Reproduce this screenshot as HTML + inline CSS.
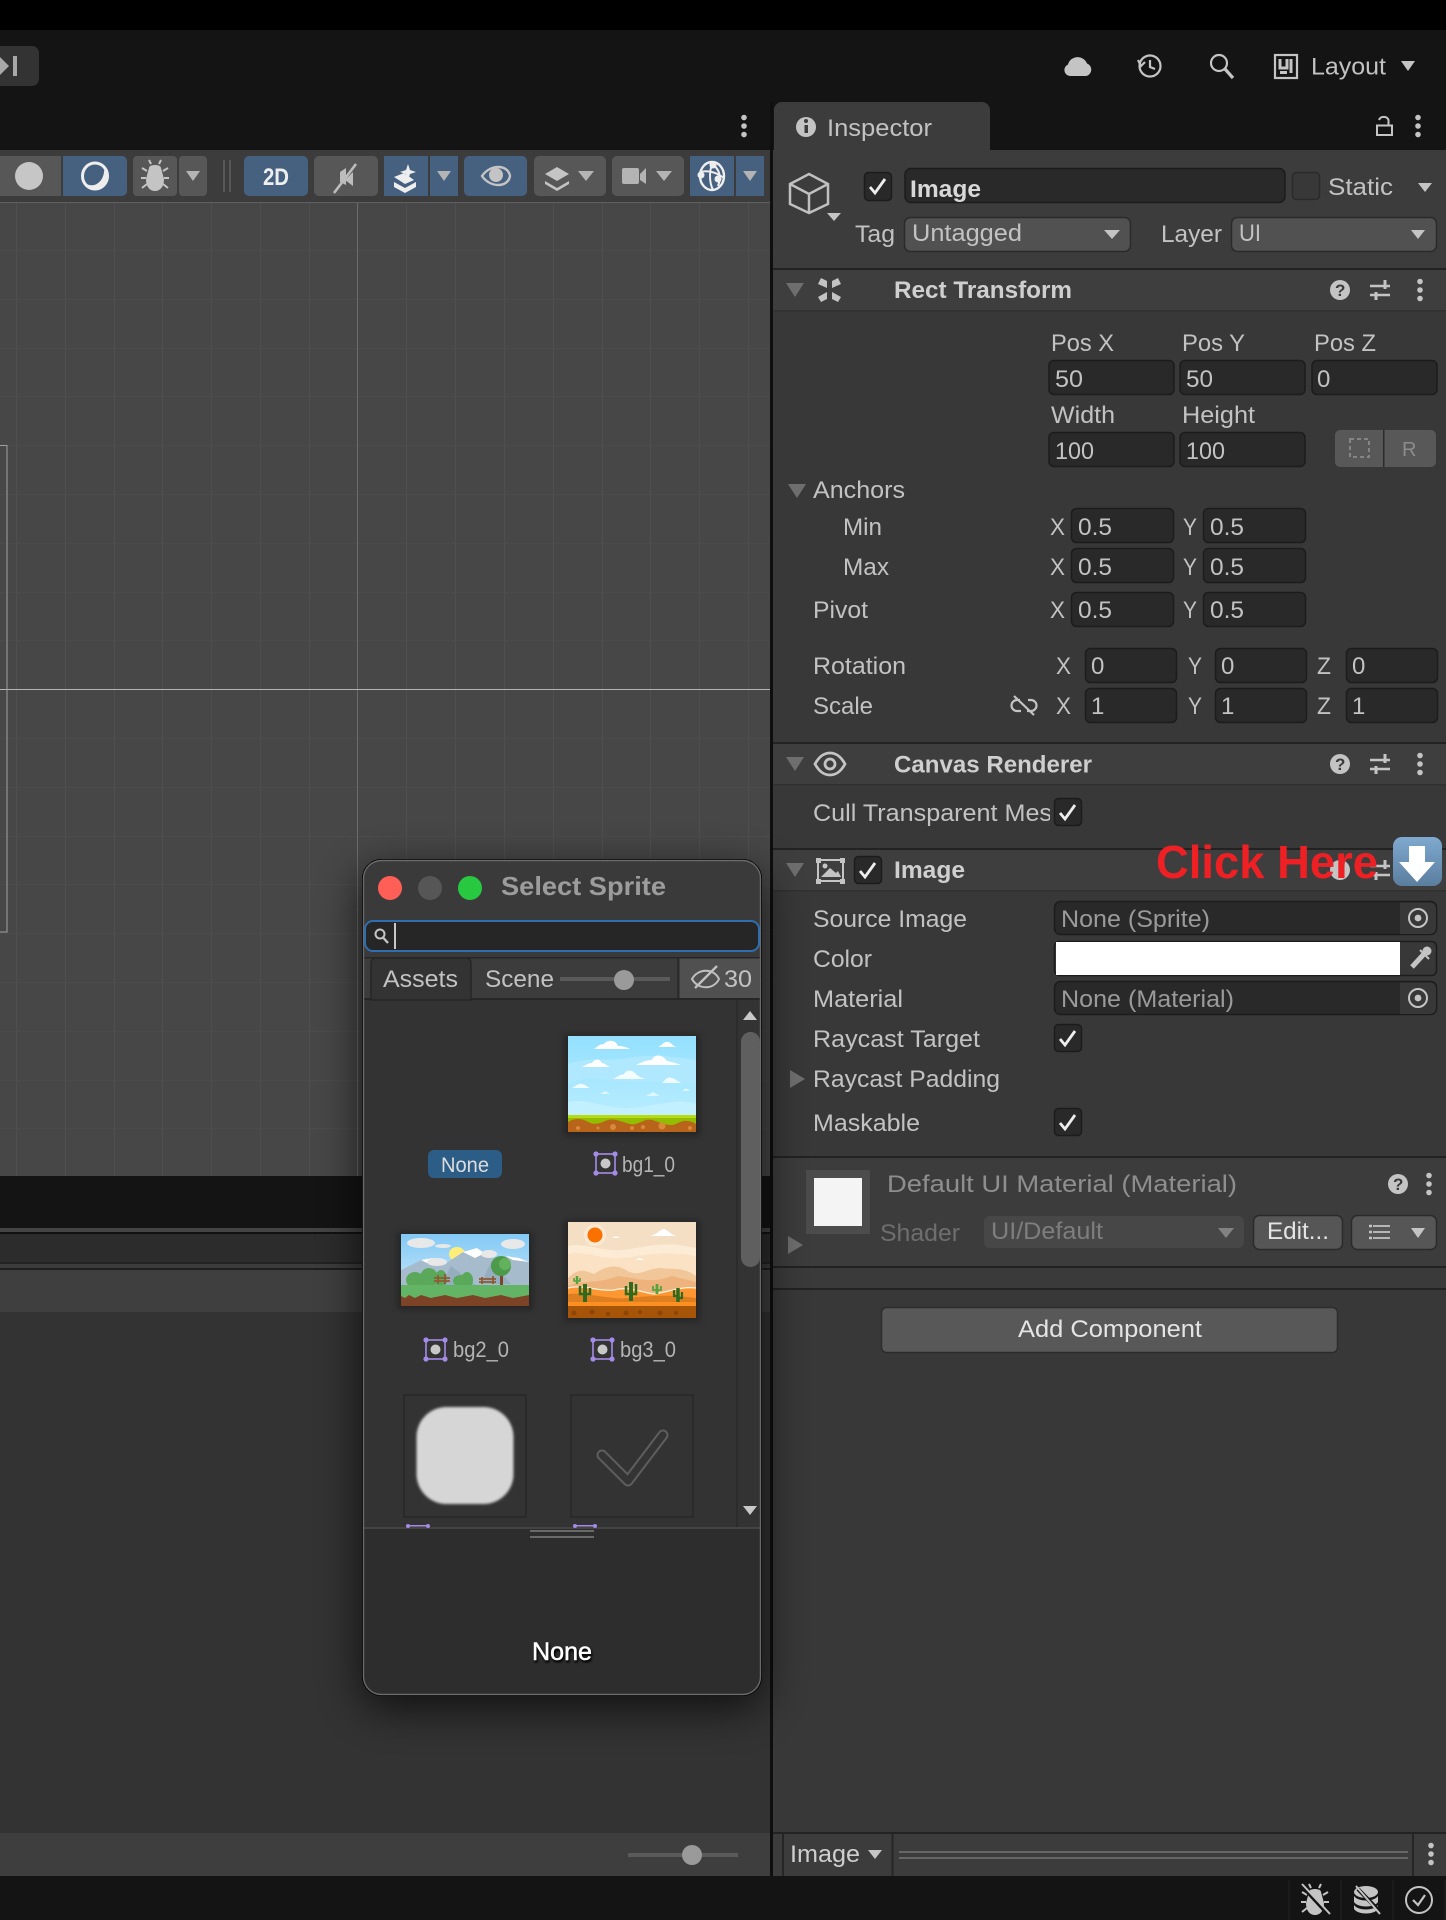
<!DOCTYPE html>
<html><head><meta charset="utf-8">
<style>
html,body{margin:0;padding:0;background:#141414;width:1446px;height:1920px;overflow:hidden}
svg{display:block;position:absolute;left:0;top:0}
text{font-family:"Liberation Sans",sans-serif;font-size:24px;fill:#c2c2c2}
.b{font-weight:bold;fill:#cfcfcf}
.w{fill:#e4e4e4}
.g{fill:#9a9a9a}
.f{fill:#292929;stroke:#1c1c1c;stroke-width:1.5}
.d{fill:#515151;stroke:#2a2a2a;stroke-width:1.5}
.c{fill:#292929;stroke:#1c1c1c;stroke-width:1.5}
.tb{fill:#575757}
.bl{fill:#46617f}
.tri{fill:#b4b4b4}
.ck{fill:none;stroke:#eee;stroke-width:2.8}
.ic{fill:none;stroke:#c4c4c4;stroke-width:2.2}
</style></head><body>
<svg width="1446" height="1920" viewBox="0 0 1446 1920" xmlns="http://www.w3.org/2000/svg">
<defs>
<symbol id="dots" overflow="visible"><circle cx="0" cy="-8.5" r="2.8" fill="#c4c4c4"/><circle cx="0" cy="0" r="2.8" fill="#c4c4c4"/><circle cx="0" cy="8.5" r="2.8" fill="#c4c4c4"/></symbol>
<symbol id="sl" overflow="visible"><path d="M-10 -4H10M-10 5H10" stroke="#c4c4c4" stroke-width="2.4" fill="none"/><path d="M5 -10V-1M-4 2V10" stroke="#c4c4c4" stroke-width="3" fill="none"/></symbol>
<symbol id="tgt" overflow="visible"><circle r="9" fill="none" stroke="#c4c4c4" stroke-width="2"/><circle r="3.4" fill="#c4c4c4"/></symbol>
<symbol id="sp" overflow="visible"><rect x="2" y="2" width="19" height="19" fill="none" stroke="#a58be8" stroke-width="1.6"/><circle cx="2" cy="2" r="2.6" fill="#a58be8"/><circle cx="21" cy="2" r="2.6" fill="#a58be8"/><circle cx="2" cy="21" r="2.6" fill="#a58be8"/><circle cx="21" cy="21" r="2.6" fill="#a58be8"/><circle cx="11.5" cy="11.5" r="5" fill="#c8c8c8"/></symbol>
<symbol id="bug" overflow="visible"><path d="M-6 -9C-6 -13 6 -13 6 -9L9 2C9 10 5 14 0 14C-5 14 -9 10 -9 2Z" fill="#c4c4c4"/><path d="M-4 -13L-6 -17M4 -13L6 -17M-8 -6L-13 -9M8 -6L13 -9M-9 1L-14 1M9 1L14 1M-8 7L-13 11M8 7L13 11" stroke="#c4c4c4" stroke-width="2" fill="none"/></symbol>
<linearGradient id="sk1" x1="0" y1="0" x2="0" y2="1"><stop offset="0" stop-color="#93e0ff"/><stop offset="1" stop-color="#bfefff"/></linearGradient>
<linearGradient id="sk2" x1="0" y1="0" x2="0" y2="1"><stop offset="0" stop-color="#82c9f5"/><stop offset="1" stop-color="#d8eefa"/></linearGradient>
<linearGradient id="arr" x1="0" y1="0" x2="0" y2="1"><stop offset="0" stop-color="#7fa9cf"/><stop offset="1" stop-color="#5b7e9f"/></linearGradient>
<filter id="shadow" x="-30%" y="-30%" width="160%" height="160%"><feGaussianBlur stdDeviation="22"/></filter>
<filter id="soft" x="-20%" y="-20%" width="140%" height="140%"><feGaussianBlur stdDeviation="1.4"/></filter>
<filter id="sm" x="-20%" y="-20%" width="140%" height="140%"><feGaussianBlur stdDeviation="3"/></filter>
<filter id="ts" x="-20%" y="-40%" width="140%" height="180%"><feGaussianBlur stdDeviation="1"/></filter>
<clipPath id="dlg"><rect x="363" y="861" width="398" height="833" rx="17"/></clipPath>
<clipPath id="cull"><rect x="800" y="790" width="250" height="40"/></clipPath>
</defs>

<!-- base -->
<rect width="1446" height="1920" fill="#141414"/>
<rect width="1446" height="30" fill="#000"/>
<rect x="-8" y="46" width="47" height="40" rx="7" fill="#333"/>
<path d="M0 57L9 66L0 75Z" fill="#a8a8a8"/><rect x="13" y="56" width="4" height="20" fill="#a8a8a8"/>
<use href="#dots" x="744" y="126"/>

<!-- top right -->
<path d="M1070 76a6 6 0 0 1 -2 -11.500a10 10 0 0 1 19 -1a6.500 6.500 0 0 1 -1 12.500Z" fill="#c4c4c4"/>
<circle cx="1150" cy="66" r="10.500" class="ic"/><path d="M1150 60V67L1155 69M1138 60L1141 66L1145 62" class="ic"/>
<circle cx="1219" cy="63" r="8" class="ic"/><path d="M1225 69L1233 78" class="ic" style="stroke-width:3.2"/>
<rect x="1275" y="55" width="22" height="23" class="ic"/><path d="M1280 59V68H1287V59M1291 59V73M1280 72.500H1287" fill="none" stroke="#c4c4c4" stroke-width="3"/>
<text x="1311" y="74.500" textLength="75" lengthAdjust="spacingAndGlyphs">Layout</text>
<path d="M1401 61H1415L1408 71Z" fill="#c4c4c4"/>

<!-- scene toolbar & view -->
<rect x="0" y="150" width="770" height="52" fill="#3c3c3c"/>
<rect x="0" y="202" width="770" height="1.500" fill="#606060"/>
<rect x="0" y="203" width="770" height="973" fill="#474747"/>
<g stroke="#4f4f4f" stroke-width="1">
<path d="M16.500 203V1176M65.500 203V1176M114.500 203V1176M162.500 203V1176M211.500 203V1176M260.500 203V1176M309.500 203V1176M406.500 203V1176M455.500 203V1176M504.500 203V1176M553.500 203V1176M602.500 203V1176M650.500 203V1176M699.500 203V1176M748.500 203V1176"/>
</g>
<g stroke="#4c4c4c" stroke-width="1">
<path d="M0 250.500H770M0 299.500H770M0 348.500H770M0 396.500H770M0 445.500H770M0 494.500H770M0 543.500H770M0 592.500H770M0 640.500H770M0 738.500H770M0 787.500H770M0 836.500H770M0 884.500H770M0 933.500H770M0 982.500H770M0 1031.500H770M0 1080.500H770M0 1128.500H770"/>
</g>
<path d="M357.500 203V1176" stroke="#6c6c6c" stroke-width="1"/>
<path d="M0 689.500H770" stroke="#b4b4b4" stroke-width="1"/>
<path d="M0 445.500H7V932H0" fill="none" stroke="#a0a0a0" stroke-width="1"/>

<!-- toolbar buttons -->
<path d="M-5 156H61V196H-5Z" class="tb"/>
<circle cx="29" cy="176" r="14" fill="#c6c6c6"/>
<path d="M63 156H122a5 5 0 0 1 5 5V191a5 5 0 0 1 -5 5H63Z" class="bl"/>
<ellipse cx="95" cy="176" rx="12.500" ry="13" fill="none" stroke="#eee" stroke-width="3"/><path d="M85 183C95 190 106 180 104 166C110 178 104 190 92 189C88 189 86 186 85 183Z" fill="#eee"/>
<rect x="133" y="156" width="44" height="40" rx="4" class="tb"/><rect x="179" y="156" width="28" height="40" rx="4" class="tb"/>
<use href="#bug" x="155" y="177"/>
<path d="M186 171H200L193 181Z" class="tri"/>
<path d="M224 160V192M230 160V192" stroke="#585858" stroke-width="2"/>
<rect x="244" y="156" width="64" height="40" rx="5" class="bl"/>
<text x="263" y="185" textLength="26" lengthAdjust="spacingAndGlyphs" style="font-size:24px;font-weight:bold;fill:#eee">2D</text>
<rect x="314" y="156" width="64" height="40" rx="5" class="tb"/>
<path d="M340 172L346 168V185L340 182ZM353 172L353 186L345 180Z" fill="#bdbdbd"/><path d="M334 193L356 164" stroke="#bdbdbd" stroke-width="2.6"/>
<path d="M384 156H428V196H384Z" class="bl"/><path d="M430 156H458V196H430Z" class="bl"/>
<path d="M408 164L410 170L416 172L410 174L408 180L406 174L400 172L406 170Z" fill="#eee"/>
<path d="M394 177L404 173L414 180L405 184Z" fill="#eee"/><path d="M394 182L405 188L416 182V187L405 193L394 187Z" fill="#eee"/>
<path d="M437 171H451L444 181Z" class="tri"/>
<rect x="464" y="156" width="63" height="40" rx="5" class="bl"/>
<path d="M482 176C490 164 508 164 510 176C508 188 490 188 482 176Z" fill="none" stroke="#c4c4c4" stroke-width="2.4"/><circle cx="496" cy="175" r="7" fill="#c4c4c4"/>
<rect x="534" y="156" width="72" height="40" rx="5" class="tb"/>
<path d="M545 174L557 167L569 174L557 181Z" fill="#c4c4c4"/><path d="M545 181L557 188L569 181V184L557 191L545 184Z" fill="#c4c4c4"/>
<path d="M578 171H594L586 181Z" class="tri"/>
<rect x="612" y="156" width="72" height="40" rx="5" class="tb"/>
<rect x="622" y="168" width="17" height="16" rx="2" fill="#b4b4b4"/><path d="M640 174L646 168V184L640 180Z" fill="#b4b4b4"/>
<path d="M656 171H672L664 181Z" class="tri"/>
<path d="M690 156H734V196H690Z" class="bl"/><path d="M736 156H764V196H736Z" class="bl"/>
<ellipse cx="712" cy="176" rx="12" ry="14" fill="none" stroke="#eee" stroke-width="2.400"/>
<path d="M700 172C708 170 716 172 724 178M713 162C709 170 709 182 713 190M713 164C719 170 722 176 718 186" fill="none" stroke="#eee" stroke-width="2"/>
<circle cx="713" cy="165" r="3.500" fill="#eee"/><circle cx="701" cy="175" r="3.500" fill="#eee"/><circle cx="718" cy="179" r="3.500" fill="#eee"/>
<path d="M743 171H757L750 181Z" class="tri"/>

<!-- lower-left panels -->
<rect x="0" y="1176" width="770" height="52" fill="#141414"/>
<rect x="0" y="1228" width="770" height="4" fill="#444"/>
<rect x="0" y="1232" width="770" height="2" fill="#111"/>
<rect x="0" y="1234" width="770" height="28" fill="#2c2c2c"/>
<rect x="0" y="1262" width="770" height="2" fill="#222"/>
<rect x="0" y="1264" width="770" height="4" fill="#3c3c3c"/>
<rect x="0" y="1268" width="770" height="2" fill="#1e1e1e"/>
<rect x="0" y="1270" width="770" height="42" fill="#3f3f3f"/>
<rect x="0" y="1312" width="770" height="521" fill="#333"/>
<rect x="0" y="1833" width="770" height="43" fill="#3e3e3e"/>
<rect x="628" y="1853" width="110" height="4" fill="#5a5a5a"/>
<ellipse cx="692" cy="1855" rx="10" ry="10" fill="#9a9a9a"/>

<!-- inspector -->
<rect x="770" y="102" width="3" height="1774" fill="#0f0f0f"/>
<rect x="773" y="150" width="673" height="1683" fill="#383838"/>
<path d="M774 150V110a8 8 0 0 1 8 -8H982a8 8 0 0 1 8 8V150Z" fill="#3c3c3c"/>
<rect x="773" y="150" width="673" height="118" fill="#3c3c3c"/>
<circle cx="806" cy="127" r="10" fill="#c4c4c4"/><rect x="804.500" y="125" width="3.500" height="8" fill="#3c3c3c"/><circle cx="806" cy="121" r="2" fill="#3c3c3c"/>
<text x="827" y="136" textLength="105" lengthAdjust="spacingAndGlyphs">Inspector</text>
<rect x="1377" y="125.500" width="15" height="9.500" fill="none" stroke="#c4c4c4" stroke-width="2"/><path d="M1379 120a5 4.500 0 0 1 9.500 0V125" fill="none" stroke="#c4c4c4" stroke-width="2"/>
<use href="#dots" x="1418" y="126"/>

<!-- object header -->
<path d="M809 174L828 184V204L809 213L790 204V184ZM790 184L809 194L828 184M809 194V213" fill="none" stroke="#c0c0c0" stroke-width="2.500"/>
<path d="M827 213H841L834 221Z" fill="#c4c4c4"/>
<rect x="864.500" y="172.500" width="27" height="28" rx="4" class="c"/><path d="M870 187L875 193L885 179" class="ck"/>
<rect x="905" y="168.500" width="380" height="34" rx="6" class="f"/>
<text x="910" y="197" textLength="71" lengthAdjust="spacingAndGlyphs" class="b" style="font-weight:bold;fill:#d8d8d8">Image</text>
<rect x="1292.500" y="172.500" width="27" height="27" rx="4" fill="#383838" stroke="#2a2a2a" stroke-width="1.500"/>
<text x="1328" y="195" textLength="65" lengthAdjust="spacingAndGlyphs">Static</text>
<path d="M1418 183H1432L1425 192Z" fill="#c4c4c4"/>
<text x="855" y="242" textLength="40" lengthAdjust="spacingAndGlyphs">Tag</text>
<rect x="904.500" y="217.500" width="226" height="34" rx="6" class="d"/>
<text x="912" y="241" textLength="110" lengthAdjust="spacingAndGlyphs">Untagged</text>
<path d="M1104 230H1120L1112 239Z" fill="#c4c4c4"/>
<text x="1161" y="242" textLength="61" lengthAdjust="spacingAndGlyphs">Layer</text>
<rect x="1231.500" y="217.500" width="205" height="34" rx="6" class="d"/>
<text x="1239" y="241" textLength="22" lengthAdjust="spacingAndGlyphs">UI</text>
<path d="M1411 230H1425L1418 239Z" fill="#c4c4c4"/>

<!-- Rect Transform -->
<rect x="773" y="268" width="673" height="2" fill="#222"/>
<rect x="773" y="270" width="673" height="40" fill="#3e3e3e"/>
<rect x="773" y="310" width="673" height="1.500" fill="#303030"/>
<path d="M786 283H804L795 297Z" fill="#6e6e6e"/>
<g fill="#c4c4c4"><path d="M821 278L827 281L827 288L818 284ZM838 278L832 281L832 288L841 284ZM818 297L827 292L827 299L821 302ZM841 297L832 292L832 299L838 302Z"/></g>
<text x="894" y="298" textLength="178" lengthAdjust="spacingAndGlyphs" class="b">Rect Transform</text>
<circle cx="1340" cy="290" r="10" fill="#c4c4c4"/><text x="1335" y="296" style="font-size:17px;font-weight:bold;fill:#3a3a3a">?</text>
<use href="#sl" x="1380" y="290"/><use href="#dots" x="1420" y="290"/>

<text x="1051" y="351" textLength="63" lengthAdjust="spacingAndGlyphs">Pos X</text><text x="1182" y="351" textLength="63" lengthAdjust="spacingAndGlyphs">Pos Y</text><text x="1314" y="351" textLength="62" lengthAdjust="spacingAndGlyphs">Pos Z</text>
<rect x="1049" y="360.500" width="125" height="34" rx="5" class="f"/><rect x="1180" y="360.500" width="125" height="34" rx="5" class="f"/><rect x="1312" y="360.500" width="125" height="34" rx="5" class="f"/>
<text x="1055" y="387" textLength="28" lengthAdjust="spacingAndGlyphs">50</text><text x="1186" y="387" textLength="27" lengthAdjust="spacingAndGlyphs">50</text><text x="1317" y="387">0</text>
<text x="1051" y="423" textLength="64" lengthAdjust="spacingAndGlyphs">Width</text><text x="1182" y="423" textLength="73" lengthAdjust="spacingAndGlyphs">Height</text>
<rect x="1049" y="432.500" width="125" height="34" rx="5" class="f"/><rect x="1180" y="432.500" width="125" height="34" rx="5" class="f"/>
<text x="1055" y="459" textLength="39" lengthAdjust="spacingAndGlyphs">100</text><text x="1186" y="459" textLength="39" lengthAdjust="spacingAndGlyphs">100</text>
<rect x="1335" y="430" width="101" height="37" rx="5" fill="#585858"/><rect x="1383" y="430" width="1.500" height="37" fill="#2a2a2a"/>
<rect x="1350" y="439" width="19" height="18" fill="none" stroke="#8a8a8a" stroke-width="1.800" stroke-dasharray="4 3"/>
<text x="1402" y="456" style="font-size:20px;fill:#8c8c8c">R</text>

<path d="M788 484H806L797 498Z" fill="#6e6e6e"/>
<text x="813" y="498" textLength="92" lengthAdjust="spacingAndGlyphs">Anchors</text>
<text x="843" y="535" textLength="39" lengthAdjust="spacingAndGlyphs">Min</text><text x="843" y="575" textLength="46" lengthAdjust="spacingAndGlyphs">Max</text><text x="813" y="618" textLength="55" lengthAdjust="spacingAndGlyphs">Pivot</text>
<g>
<text x="1050" y="535" textLength="15" lengthAdjust="spacingAndGlyphs">X</text><text x="1183" y="535" textLength="14" lengthAdjust="spacingAndGlyphs">Y</text>
<rect x="1071.500" y="508.500" width="102" height="34" rx="5" class="f"/><rect x="1203.500" y="508.500" width="102" height="34" rx="5" class="f"/>
<text x="1078" y="535" textLength="34" lengthAdjust="spacingAndGlyphs">0.5</text><text x="1210" y="535" textLength="34" lengthAdjust="spacingAndGlyphs">0.5</text>
<text x="1050" y="575" textLength="15" lengthAdjust="spacingAndGlyphs">X</text><text x="1183" y="575" textLength="14" lengthAdjust="spacingAndGlyphs">Y</text>
<rect x="1071.500" y="548.500" width="102" height="34" rx="5" class="f"/><rect x="1203.500" y="548.500" width="102" height="34" rx="5" class="f"/>
<text x="1078" y="575" textLength="34" lengthAdjust="spacingAndGlyphs">0.5</text><text x="1210" y="575" textLength="34" lengthAdjust="spacingAndGlyphs">0.5</text>
<text x="1050" y="618" textLength="15" lengthAdjust="spacingAndGlyphs">X</text><text x="1183" y="618" textLength="14" lengthAdjust="spacingAndGlyphs">Y</text>
<rect x="1071.500" y="592.500" width="102" height="34" rx="5" class="f"/><rect x="1203.500" y="592.500" width="102" height="34" rx="5" class="f"/>
<text x="1078" y="618" textLength="34" lengthAdjust="spacingAndGlyphs">0.5</text><text x="1210" y="618" textLength="34" lengthAdjust="spacingAndGlyphs">0.5</text>
</g>
<text x="813" y="674" textLength="93" lengthAdjust="spacingAndGlyphs">Rotation</text><text x="813" y="714" textLength="60" lengthAdjust="spacingAndGlyphs">Scale</text>
<g>
<text x="1056" y="674" textLength="15" lengthAdjust="spacingAndGlyphs">X</text><text x="1188" y="674" textLength="14" lengthAdjust="spacingAndGlyphs">Y</text><text x="1317" y="674" textLength="14" lengthAdjust="spacingAndGlyphs">Z</text>
<rect x="1085.500" y="648.500" width="91" height="34" rx="5" class="f"/><rect x="1215.500" y="648.500" width="91" height="34" rx="5" class="f"/><rect x="1346.500" y="648.500" width="91" height="34" rx="5" class="f"/>
<text x="1091" y="674">0</text><text x="1221" y="674">0</text><text x="1352" y="674">0</text>
<text x="1056" y="714" textLength="15" lengthAdjust="spacingAndGlyphs">X</text><text x="1188" y="714" textLength="14" lengthAdjust="spacingAndGlyphs">Y</text><text x="1317" y="714" textLength="14" lengthAdjust="spacingAndGlyphs">Z</text>
<rect x="1085.500" y="688.500" width="91" height="34" rx="5" class="f"/><rect x="1215.500" y="688.500" width="91" height="34" rx="5" class="f"/><rect x="1346.500" y="688.500" width="91" height="34" rx="5" class="f"/>
<text x="1091" y="714">1</text><text x="1221" y="714">1</text><text x="1352" y="714">1</text>
</g>
<path d="M1020 700H1017a5 5 0 0 0 0 11H1021M1028 700H1031a5 5 0 0 1 0 11H1027M1014 696L1034 715" fill="none" stroke="#c4c4c4" stroke-width="2.200"/>

<!-- Canvas Renderer -->
<rect x="773" y="742" width="673" height="2" fill="#222"/>
<rect x="773" y="744" width="673" height="40" fill="#3e3e3e"/>
<rect x="773" y="784" width="673" height="1.500" fill="#303030"/>
<path d="M786 757H804L795 771Z" fill="#6e6e6e"/>
<path d="M815 764C820 755 825 753 830 753C835 753 840 755 845 764C840 773 835 775 830 775C825 775 820 773 815 764Z" fill="none" stroke="#c4c4c4" stroke-width="2.800"/><circle cx="830" cy="764" r="5" fill="none" stroke="#c4c4c4" stroke-width="2.800"/>
<text x="894" y="772.500" textLength="198" lengthAdjust="spacingAndGlyphs" class="b">Canvas Renderer</text>
<circle cx="1340" cy="764" r="10" fill="#c4c4c4"/><text x="1335" y="770" style="font-size:17px;font-weight:bold;fill:#3a3a3a">?</text>
<use href="#sl" x="1380" y="764"/><use href="#dots" x="1420" y="764"/>
<g clip-path="url(#cull)"><text x="813" y="821" textLength="253" lengthAdjust="spacingAndGlyphs">Cull Transparent Mesh</text></g>
<rect x="1054.500" y="798.500" width="27" height="27" rx="4" class="c"/><path d="M1060 813L1065 819L1075 805" class="ck"/>

<!-- Image comp -->
<rect x="773" y="848" width="673" height="2" fill="#222"/>
<rect x="773" y="850" width="673" height="40" fill="#3e3e3e"/>
<rect x="773" y="890" width="673" height="1.500" fill="#303030"/>
<path d="M786 863H804L795 877Z" fill="#6e6e6e"/>
<rect x="818" y="860" width="25" height="21" fill="none" stroke="#c4c4c4" stroke-width="2"/>
<g fill="#c4c4c4"><rect x="816" y="858" width="5" height="5"/><rect x="840" y="858" width="5" height="5"/><rect x="816" y="879" width="5" height="5"/><rect x="840" y="879" width="5" height="5"/><path d="M821 877L830 868L836 873L838 871L841 877Z"/><circle cx="825" cy="866" r="2.500"/></g>
<rect x="854.500" y="856.500" width="27" height="27" rx="4" class="c"/><path d="M860 871L865 877L875 863" class="ck"/>
<text x="894" y="878" textLength="71" lengthAdjust="spacingAndGlyphs" class="b">Image</text>
<circle cx="1340" cy="870" r="10" fill="#c4c4c4"/>
<use href="#sl" x="1380" y="870"/>

<text x="813" y="927" textLength="154" lengthAdjust="spacingAndGlyphs">Source Image</text>
<rect x="1054.500" y="901.500" width="382" height="33" rx="6" class="f"/>
<path d="M1400 902.500H1430a6 6 0 0 1 6 6V928a6 6 0 0 1 -6 6H1400Z" fill="#383838"/>
<text x="1061" y="927" textLength="149" lengthAdjust="spacingAndGlyphs" class="g">None (Sprite)</text>
<use href="#tgt" x="1418" y="918"/>
<text x="813" y="967" textLength="59" lengthAdjust="spacingAndGlyphs">Color</text>
<rect x="1054.500" y="941.500" width="382" height="34" rx="5" fill="#383838" stroke="#1c1c1c" stroke-width="1.500"/>
<rect x="1056" y="942" width="344" height="33" fill="#fff"/>
<path d="M1412 967L1424 954" stroke="#c4c4c4" stroke-width="5" fill="none"/><circle cx="1427" cy="951" r="4.500" fill="#c4c4c4"/><path d="M1420 950L1429 959" stroke="#c4c4c4" stroke-width="2"/>
<text x="813" y="1007" textLength="90" lengthAdjust="spacingAndGlyphs">Material</text>
<rect x="1054.500" y="981.500" width="382" height="33" rx="6" class="f"/>
<path d="M1400 982.500H1430a6 6 0 0 1 6 6V1008a6 6 0 0 1 -6 6H1400Z" fill="#383838"/>
<text x="1061" y="1007" textLength="173" lengthAdjust="spacingAndGlyphs" class="g">None (Material)</text>
<use href="#tgt" x="1418" y="998"/>
<text x="813" y="1047" textLength="167" lengthAdjust="spacingAndGlyphs">Raycast Target</text>
<rect x="1054.500" y="1024.500" width="27" height="27" rx="4" class="c"/><path d="M1060 1039L1065 1045L1075 1031" class="ck"/>
<path d="M790 1070L805 1079L790 1088Z" fill="#6e6e6e"/>
<text x="813" y="1087" textLength="187" lengthAdjust="spacingAndGlyphs">Raycast Padding</text>
<text x="813" y="1131" textLength="107" lengthAdjust="spacingAndGlyphs">Maskable</text>
<rect x="1054.500" y="1108.500" width="27" height="27" rx="4" class="c"/><path d="M1060 1123L1065 1129L1075 1115" class="ck"/>

<!-- material -->
<rect x="773" y="1156" width="673" height="2" fill="#222"/>
<rect x="773" y="1158" width="673" height="108" fill="#3c3c3c"/>
<rect x="806" y="1170" width="64" height="64" fill="#4c4c4c"/><rect x="814" y="1178" width="48" height="48" fill="#f4f4f4"/>
<path d="M788 1236L803 1245L788 1254Z" fill="#6e6e6e"/>
<text x="887" y="1192" textLength="350" lengthAdjust="spacingAndGlyphs" style="fill:#8e8e8e">Default UI Material (Material)</text>
<circle cx="1398" cy="1184" r="10" fill="#c4c4c4"/><text x="1393" y="1190" style="font-size:17px;font-weight:bold;fill:#3a3a3a">?</text>
<use href="#dots" x="1429" y="1184"/>
<text x="880" y="1241" textLength="80" lengthAdjust="spacingAndGlyphs" style="fill:#6e6e6e">Shader</text>
<rect x="984" y="1216" width="260" height="32" rx="6" fill="#474747"/>
<text x="991" y="1239" textLength="112" lengthAdjust="spacingAndGlyphs" style="fill:#7e7e7e">UI/Default</text>
<path d="M1218 1228H1234L1226 1238Z" fill="#828282"/>
<rect x="1253.500" y="1215.500" width="89" height="34" rx="6" fill="#565656" stroke="#2a2a2a" stroke-width="1.500"/>
<text x="1267" y="1239" textLength="62" lengthAdjust="spacingAndGlyphs" class="w">Edit...</text>
<rect x="1351.500" y="1215.500" width="85" height="34" rx="6" fill="#565656" stroke="#2a2a2a" stroke-width="1.500"/>
<path d="M1373 1226H1390M1373 1232H1390M1373 1238H1390" stroke="#c4c4c4" stroke-width="1.800"/><path d="M1369 1226H1372M1369 1232H1372M1369 1238H1372" stroke="#c4c4c4" stroke-width="2.500"/>
<path d="M1411 1228H1425L1418 1238Z" fill="#c4c4c4"/>
<rect x="773" y="1266" width="673" height="2" fill="#222"/>
<rect x="773" y="1268" width="673" height="20" fill="#3a3a3a"/>
<rect x="773" y="1288" width="673" height="2" fill="#222"/>
<rect x="881.500" y="1307.500" width="456" height="45" rx="5" fill="#585858" stroke="#2c2c2c" stroke-width="1.500"/>
<text x="1018" y="1337" textLength="184" lengthAdjust="spacingAndGlyphs" class="w">Add Component</text>

<!-- inspector bottom bar -->
<rect x="773" y="1832" width="673" height="2" fill="#232323"/>
<rect x="773" y="1834" width="673" height="42" fill="#3c3c3c"/>
<path d="M783 1834V1876M892.500 1834V1876M1413 1834V1876" stroke="#262626" stroke-width="2"/>
<text x="790" y="1862" textLength="70" lengthAdjust="spacingAndGlyphs" style="fill:#cfcfcf">Image</text>
<path d="M868 1850H882L875 1859Z" fill="#c4c4c4"/>
<rect x="899" y="1851" width="509" height="2" fill="#666"/><rect x="899" y="1857" width="509" height="2" fill="#666"/>
<use href="#dots" x="1431" y="1854"/>

<!-- status bar -->
<path d="M1289 1880V1920M1341 1880V1920M1393 1880V1920M1445 1880V1920" stroke="#222" stroke-width="1"/>
<use href="#bug" x="1315" y="1901"/><path d="M1304 1888L1328 1914" stroke="#141414" stroke-width="4"/><path d="M1302 1884L1330 1914" stroke="#c4c4c4" stroke-width="2"/>
<g fill="#c4c4c4"><ellipse cx="1366" cy="1892" rx="12" ry="6"/><path d="M1354 1896C1358 1902 1374 1902 1378 1896V1902C1374 1908 1358 1908 1354 1902Z"/><path d="M1354 1905C1358 1911 1374 1911 1378 1905V1909C1374 1915 1358 1915 1354 1909Z"/></g>
<path d="M1358 1889L1382 1914" stroke="#141414" stroke-width="4"/><path d="M1356 1886L1380 1914" stroke="#c4c4c4" stroke-width="2"/>
<circle cx="1419" cy="1900" r="13" fill="none" stroke="#c4c4c4" stroke-width="2"/><path d="M1413 1900L1418 1905L1425 1895" fill="none" stroke="#c4c4c4" stroke-width="2.200"/>

<!-- dialog shadow -->
<rect x="362" y="872" width="400" height="835" rx="18" fill="#000" opacity=".7" filter="url(#shadow)"/>

<!-- dialog -->
<rect x="362.500" y="859.500" width="399" height="836" rx="19" fill="#2d2d2d" stroke="#000" stroke-width="1"/>
<g clip-path="url(#dlg)">
<rect x="362" y="860" width="400" height="97" fill="#3a3a3a"/>
<rect x="362" y="957" width="400" height="43" fill="#3c3c3c"/>
<rect x="362" y="957" width="400" height="1.500" fill="#262626"/>
<rect x="362" y="998" width="400" height="2" fill="#262626"/>
<rect x="362" y="1000" width="400" height="527" fill="#333"/>
<rect x="362" y="1527" width="400" height="2" fill="#444"/>
<rect x="362" y="1529" width="400" height="170" fill="#2d2d2d"/>
</g>
<rect x="363.500" y="860.500" width="397" height="834" rx="18" fill="none" stroke="#6a6a6a" stroke-width="1.400"/>
<circle cx="390" cy="888" r="12" fill="#ff5f57"/><circle cx="430" cy="888" r="12" fill="#565656"/><circle cx="470" cy="888" r="12" fill="#28c840"/>
<text x="501" y="895" textLength="165" lengthAdjust="spacingAndGlyphs" style="font-size:26px;font-weight:bold;fill:#9c9c9c">Select Sprite</text>
<rect x="365" y="921" width="394" height="30" rx="8" fill="#262626" stroke="#2f6eb0" stroke-width="2"/>
<circle cx="380" cy="934" r="4.500" fill="none" stroke="#c4c4c4" stroke-width="2"/><path d="M383.500 938L388 943" stroke="#c4c4c4" stroke-width="2.400"/>
<rect x="394" y="923" width="2" height="26" fill="#c8c8c8"/>
<path d="M371 1000V963a5 5 0 0 1 5 -5H466a5 5 0 0 1 5 5V1000Z" fill="#333" stroke="#262626" stroke-width="1.500"/>
<text x="383" y="987" textLength="75" lengthAdjust="spacingAndGlyphs">Assets</text>
<text x="485" y="987" textLength="69" lengthAdjust="spacingAndGlyphs">Scene</text>
<path d="M678 957V998" stroke="#262626" stroke-width="1.500"/>
<rect x="560" y="977" width="110" height="4" fill="#5a5a5a"/>
<circle cx="624" cy="980" r="10" fill="#9a9a9a"/>
<rect x="680" y="958.500" width="80" height="39.500" fill="#505050"/>
<path d="M692 979C698 968 714 968 719 979C714 990 698 990 692 979Z" fill="none" stroke="#c0c0c0" stroke-width="2"/><path d="M695 988L717 966" stroke="#c0c0c0" stroke-width="2.400"/>
<text x="724" y="987" textLength="28" lengthAdjust="spacingAndGlyphs">30</text>
<!-- scroll -->
<path d="M737 1000V1527" stroke="#2a2a2a" stroke-width="1.500"/>
<rect x="741" y="1032" width="19" height="235" rx="9.500" fill="#5f5f5f"/>
<path d="M743 1020H757L750 1011Z" fill="#c8c8c8"/>
<path d="M743 1506H757L750 1515Z" fill="#c8c8c8"/>

<!-- None badge -->
<rect x="428" y="1150" width="74" height="28" rx="6" fill="#2c5d87"/>
<text x="441" y="1172" textLength="48" lengthAdjust="spacingAndGlyphs" style="font-size:21px;fill:#dcdcdc">None</text>

<!-- bg1 -->
<rect x="564" y="1034" width="136" height="102" fill="#000" opacity=".25" filter="url(#sm)"/>
<g transform="translate(568 1036)">
<rect width="128" height="96" fill="url(#sk1)"/>
<path d="M0 28C20 20 40 26 60 22S100 20 128 24V50C100 42 70 48 40 44S10 46 0 48Z" fill="#b3e9ff" opacity=".8"/>
<path d="M0 66C20 62 40 74 64 72S110 62 128 68V80H0Z" fill="#c3f0ff"/>
<g fill="#fff">
<path d="M26 13H62C56 10 52 10 50 10C48 4 40 3 36 8C32 8 30 10 26 13Z"/>
<path d="M90 11H108C104 9 102 5 98 6C96 6 94 9 90 11Z"/>
<path d="M14 31H42C38 29 36 27 34 27C30 21 26 24 24 27C20 27 18 29 14 31Z"/>
<path d="M68 29H113C106 26 100 26 98 24C94 18 86 18 84 24C78 24 72 27 68 29Z"/>
<path d="M45 43H77C72 41 70 40 68 38C64 33 58 34 56 38C50 39 50 41 45 43Z" opacity=".85"/>
<path d="M94 47H113C108 44 106 42 104 42C100 40 98 43 94 47Z" opacity=".8"/>
<path d="M4 52H22C18 50 16 48 14 48C10 47 8 50 4 52Z" opacity=".8"/>
<path d="M32 58H42L37 55ZM114 55H122L118 52ZM78 60H92L85 56Z" opacity=".6"/>
</g>
<rect y="79" width="128" height="17" fill="#b8641a"/>
<path d="M0 79H128V88C122 84 116 84 110 87C102 92 92 86 84 84C76 82 70 90 62 88C54 86 46 82 40 84C34 86 28 90 20 86C14 82 6 82 0 86Z" fill="#93bd00"/>
<rect y="79" width="128" height="3" fill="#b6db10"/>
<g fill="#d8893a"><circle cx="45" cy="91" r="3"/><circle cx="94" cy="90" r="3.500"/><circle cx="10" cy="92" r="2"/><circle cx="64" cy="92" r="2"/><circle cx="30" cy="92" r="1.500"/><circle cx="75" cy="91" r="2"/><circle cx="122" cy="92" r="2"/></g>
</g>

<!-- bg1 label -->
<use href="#sp" x="594" y="1152"/>
<text x="622" y="1172" textLength="53" lengthAdjust="spacingAndGlyphs" style="font-size:22px;fill:#b4b4b4">bg1_0</text>

<!-- bg2 -->
<rect x="397" y="1232" width="136" height="78" fill="#000" opacity=".25" filter="url(#sm)"/>
<g transform="translate(401 1234)">
<rect width="128" height="72" fill="url(#sk2)"/>
<ellipse cx="56" cy="20" rx="8" ry="7" fill="#ffef7a"/>
<path d="M0 36L20 26L32 24L44 30L62 18L76 14L90 24L104 22L128 28V56H0Z" fill="#a6bccd"/>
<path d="M62 18L76 14L90 24L80 21L74 24L68 21ZM20 26L32 24L40 28L30 27L26 29ZM104 22L118 24L128 28L112 26Z" fill="#fff"/>
<path d="M50 32L76 52H40ZM90 28L110 50H80Z" fill="#96adc0"/>
<g fill="#e8e8e8"><ellipse cx="20" cy="9" rx="14" ry="5"/><ellipse cx="112" cy="10" rx="12" ry="5"/><ellipse cx="36" cy="28" rx="10" ry="4"/><ellipse cx="88" cy="20" rx="8" ry="4"/><ellipse cx="42" cy="12" rx="8" ry="2"/></g>
<g fill="#5aa85a"><ellipse cx="14" cy="46" rx="9" ry="8"/><ellipse cx="28" cy="44" rx="9" ry="10"/><ellipse cx="40" cy="45" rx="6" ry="9"/><ellipse cx="60" cy="47" rx="8" ry="6"/><ellipse cx="66" cy="46" rx="6" ry="8"/></g>
<path d="M37 41V50M44 40V50M33 44H49M33 47H49M81 43V50M92 42V50M78 45H95M78 48H95" stroke="#8e5a33" stroke-width="1.800"/>
<rect x="99" y="34" width="3" height="17" fill="#77492a"/>
<circle cx="100" cy="32" r="10" fill="#4d9a4a"/><circle cx="104" cy="30" r="6" fill="#62b25d"/>
<rect y="51" width="128" height="13" fill="#64b465"/>
<path d="M0 62L4 64L8 61L14 64L20 61L30 64L44 61L56 64L72 61L84 64L100 61L112 64L128 61V72H0Z" fill="#7c4326"/>
</g>
<use href="#sp" x="424" y="1338"/>
<text x="453" y="1357" textLength="56" lengthAdjust="spacingAndGlyphs" style="font-size:22px;fill:#b4b4b4">bg2_0</text>

<!-- bg3 -->
<rect x="564" y="1220" width="136" height="102" fill="#000" opacity=".25" filter="url(#sm)"/>
<g transform="translate(568 1222)">
<rect width="128" height="96" fill="#f4dfc4"/>
<path d="M0 24C18 20 32 30 54 28S92 18 128 26V70H0Z" fill="#fcecd6"/>
<path d="M0 32C18 28 32 38 54 36S92 28 128 34V70H0Z" fill="#fbe2c5"/>
<circle cx="27" cy="13" r="11" fill="#f9e8d2"/><circle cx="27" cy="13" r="7.500" fill="#fb7100"/>
<path d="M82 14H108C102 12 100 8 96 7C92 7 90 12 82 14ZM68 38H76C72 35 70 36 68 38ZM44 16H52L48 14Z" fill="#fff"/>
<path d="M0 56C10 46 16 48 26 52C38 44 48 42 58 48C70 56 80 46 92 46C104 48 114 44 128 54V70H0Z" fill="#f1c79a"/>
<path d="M0 64C14 58 30 62 50 54C68 56 84 62 104 54L128 60V72H0Z" fill="#eeb37c"/>
<path d="M0 66C14 62 32 70 46 68C60 64 72 70 86 72C100 70 114 64 128 66V84H0Z" fill="#fe9632"/>
<path d="M0 66C14 62 32 70 46 68C60 64 72 70 86 72C100 70 114 64 128 66" fill="none" stroke="#fff3dc" stroke-width="1.200"/>
<path d="M0 72C20 70 40 78 60 76S100 72 128 76V84H0Z" fill="#dd7f20"/>
<rect y="84" width="128" height="12" fill="#a65408"/>
<path d="M0 84H128V80H0Z" fill="#fb8f22"/>
<g fill="#8b4607"><circle cx="6" cy="91" r="2.500"/><circle cx="24" cy="90" r="2.500"/><circle cx="40" cy="92" r="2"/><circle cx="58" cy="91" r="2.500"/><circle cx="72" cy="90" r="2"/><circle cx="92" cy="91" r="2.500"/><circle cx="108" cy="91" r="2"/></g>
<g stroke="#2f6a1f" fill="none"><path d="M17 80V62" stroke-width="4"/><path d="M12 64V72H17M22 66V72H17" stroke-width="2.500"/>
<path d="M63 79V60" stroke-width="4"/><path d="M58 64V72H63M68 62V72H63" stroke-width="2.500"/>
<path d="M110 80V66" stroke-width="3.500"/><path d="M106 68V74H110M114 70V76H110" stroke-width="2.200"/></g>
<g stroke="#55a33e" fill="none"><path d="M89 72V62" stroke-width="2.800"/><path d="M85 64V68H89M93 64V68H89" stroke-width="1.800"/>
<path d="M9 62V54" stroke-width="2.500"/><path d="M6 56V59H9M12 56V59H9" stroke-width="1.600"/></g>
</g>
<use href="#sp" x="591" y="1338"/>
<text x="620" y="1357" textLength="56" lengthAdjust="spacingAndGlyphs" style="font-size:22px;fill:#b4b4b4">bg3_0</text>

<!-- thumb boxes -->
<rect x="404" y="1395" width="122" height="122" fill="#333" stroke="#2a2a2a" stroke-width="2"/>
<rect x="416.500" y="1407" width="97" height="97" rx="30" fill="#d6d6d6" filter="url(#soft)"/>
<rect x="571" y="1395" width="122" height="122" fill="#333" stroke="#2a2a2a" stroke-width="2"/>
<path d="M602 1455L628 1481L663 1435" fill="none" stroke="#5e5e5e" stroke-width="11" stroke-linecap="round" stroke-linejoin="round"/>
<path d="M602 1455L628 1481L663 1435" fill="none" stroke="#343434" stroke-width="7" stroke-linecap="round" stroke-linejoin="round"/>
<rect x="408" y="1525" width="20" height="1.500" fill="#a58be8"/><circle cx="408" cy="1526" r="2" fill="#a58be8"/><circle cx="428" cy="1526" r="2" fill="#a58be8"/>
<rect x="575" y="1525" width="20" height="1.500" fill="#a58be8"/><circle cx="575" cy="1526" r="2" fill="#a58be8"/><circle cx="595" cy="1526" r="2" fill="#a58be8"/>
<rect x="530" y="1530" width="64" height="2" fill="#6a6a6a"/><rect x="530" y="1536" width="64" height="2" fill="#6a6a6a"/>

<text x="532" y="1660" textLength="60" lengthAdjust="spacingAndGlyphs" style="font-size:25px;fill:#000;stroke:#000;stroke-width:1" transform="translate(1 2)" filter="url(#ts)">None</text>
<text x="532" y="1660" textLength="60" lengthAdjust="spacingAndGlyphs" style="font-size:25px;fill:#fff;stroke:#fff;stroke-width:.5">None</text>

<!-- annotation -->
<text x="1156" y="878" textLength="222" lengthAdjust="spacingAndGlyphs" style="font-size:46px;font-weight:bold;fill:#ee2024">Click Here</text>
<rect x="1393" y="837" width="49" height="49" rx="9" fill="url(#arr)"/>
<path d="M1409 846H1425V862H1435L1417 882L1399 862H1409Z" fill="#fff"/>
</svg>
</body></html>
